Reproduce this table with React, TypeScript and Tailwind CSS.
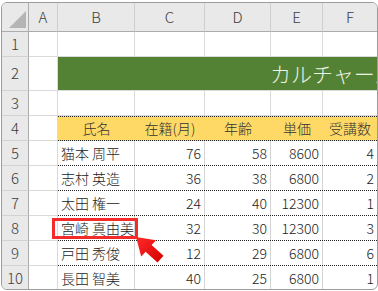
import React from 'react';

type Person = [string, number, number, number, number];

const people: Person[] = [
  ['猫本 周平', 76, 58, 8600, 4],
  ['志村 英造', 36, 38, 6800, 2],
  ['太田 権一', 24, 40, 12300, 1],
  ['宮崎 真由美', 32, 30, 12300, 3],
  ['戸田 秀俊', 12, 29, 6800, 6],
  ['長田 智美', 40, 25, 6800, 1],
];

const columns = [
  { label: 'A', width: 'w-[29px]' },
  { label: 'B', width: 'w-[77px]' },
  { label: 'C', width: 'w-[70px]' },
  { label: 'D', width: 'w-[66px]' },
  { label: 'E', width: 'w-[52px]' },
  { label: 'F', width: 'w-[54px]' },
];

const headings = ['氏名', '在籍(月)', '年齢', '単価', '受講数'];

const RowHead = ({ n, h }: { n: number; h: string }) => (
  <div
    className={`${h} w-[27px] shrink-0 flex items-center justify-center border-r border-b border-r-[#acacac] border-b-[#d2d2d2] bg-[#e9e9e9] text-[15px] text-[#3c3c3c]`}
  >
    {n}
  </div>
);

const Blank = ({ w, last }: { w: string; last?: boolean }) => (
  <div className={`${w} shrink-0 border-b border-[#dadada] ${last ? '' : 'border-r'}`} />
);

const ColumnA = () => <div className="w-[29px] shrink-0 border-r border-b border-[#dadada]" />;

const App: React.FC = () => {
  return (
    <div className="h-[291px] w-[378px] bg-white overflow-hidden font-light font-['Noto_Sans_CJK_JP',sans-serif]">
      <div className="relative ml-[1px] mt-[2px] h-[288px] w-[377px] overflow-hidden rounded-[6px] border border-[#9c9c9c] text-[#222]">
        {/* column headers */}
        <div className="flex h-[29px]">
          <div className="flex w-[27px] shrink-0 items-end justify-end border-r border-b border-[#acacac] bg-[#e9e9e9] pr-[2px] pb-[3px]">
            <svg width="17" height="17" viewBox="0 0 17 17">
              <polygon points="17,0 17,17 0,17" fill="#b5b5b5" />
            </svg>
          </div>
          {columns.map((c, i) => (
            <div
              key={c.label}
              className={`${c.width} shrink-0 flex items-center justify-center border-b border-b-[#acacac] bg-[#e9e9e9] text-[15px] text-[#3c3c3c] ${
                i < columns.length - 1 ? 'border-r border-r-[#cfcfcf]' : ''
              }`}
            >
              {c.label}
            </div>
          ))}
        </div>

        {/* row 1 */}
        <div className="flex h-[25px]">
          <RowHead n={1} h="h-[25px]" />
          <ColumnA />
          <Blank w="w-[77px]" />
          <Blank w="w-[70px]" />
          <Blank w="w-[66px]" />
          <Blank w="w-[52px]" />
          <Blank w="w-[54px]" last />
        </div>

        {/* row 2: title band, runs past the visible columns */}
        <div className="flex h-[34px]">
          <RowHead n={2} h="h-[34px]" />
          <ColumnA />
          <div className="flex flex-1 items-center overflow-hidden whitespace-nowrap border-b border-[#dadada] bg-[#548235] pl-[212px] text-[21px] text-[#edf2e6]">
            カルチャースクール受講者一覧
          </div>
        </div>

        {/* row 3 */}
        <div className="flex h-[25px]">
          <RowHead n={3} h="h-[25px]" />
          <ColumnA />
          <Blank w="w-[77px]" />
          <Blank w="w-[70px]" />
          <Blank w="w-[66px]" />
          <Blank w="w-[52px]" />
          <Blank w="w-[54px]" last />
        </div>

        {/* row 4: headings */}
        <div className="flex h-[25px]">
          <RowHead n={4} h="h-[25px]" />
          <ColumnA />
          <div className="flex flex-1 border-y border-dotted border-[#222] bg-[#ffd966] text-[14px] text-[#333]">
            {headings.map((t, i) => (
              <div key={t} className={`${columns[i + 1].width} shrink-0 flex items-center justify-center`}>
                {t}
              </div>
            ))}
          </div>
        </div>

        {/* data rows */}
        {people.map(([name, months, age, price, count], r) => (
          <div key={name} className="flex h-[25px]">
            <RowHead n={r + 5} h="h-[25px]" />
            <ColumnA />
            <div className="flex flex-1 border-b border-dotted border-[#222] text-[14px]">
              <div className="w-[77px] shrink-0 flex items-center overflow-hidden whitespace-nowrap border-r border-r-[#d4d4d4] pl-[3px]">
                {name}
              </div>
              <div className="w-[70px] shrink-0 flex items-center justify-end border-r border-r-[#d4d4d4] pr-[3px]">
                {months}
              </div>
              <div className="w-[66px] shrink-0 flex items-center justify-end border-r border-r-[#d4d4d4] pr-[3px]">
                {age}
              </div>
              <div className="w-[52px] shrink-0 flex items-center justify-end border-r border-r-[#d4d4d4] pr-[3px]">
                {price}
              </div>
              <div className="w-[54px] shrink-0 flex items-center justify-end pr-[3px]">{count}</div>
            </div>
          </div>
        ))}

        {/* highlight box and arrow */}
        <div className="absolute left-[50px] top-[215px] h-[21px] w-[86px] border-[3px] border-[#f52a2a]" />
        <svg
          className="absolute left-[128px] top-[229px]"
          width="40"
          height="34"
          viewBox="130 232 40 34"
        >
          <defs>
            <linearGradient id="arrowFill" x1="0" y1="0" x2="1" y2="1">
              <stop offset="0" stopColor="#ff2a2a" />
              <stop offset="1" stopColor="#d40000" />
            </linearGradient>
          </defs>
          <polygon
            points="136,237 156,240.2 151.6,245.1 163.5,255.8 157.5,262.4 145.6,251.7 141.2,256.6"
            fill="url(#arrowFill)"
          />
        </svg>
      </div>
    </div>
  );
};

export default App;
